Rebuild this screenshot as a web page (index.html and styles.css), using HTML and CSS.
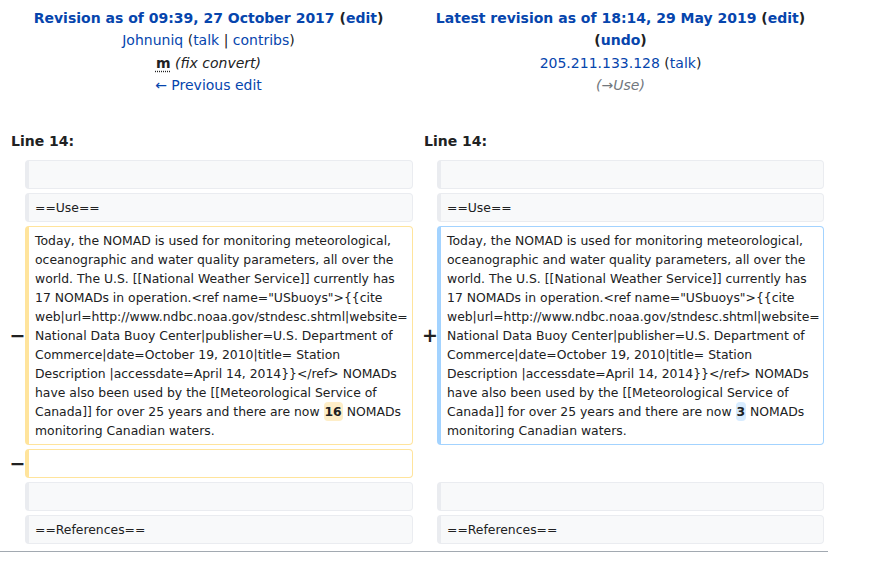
FILE: index.html
```html
<!DOCTYPE html>
<html>
<head>
<meta charset="utf-8">
<link rel="stylesheet" href="styles.css">
</head>
<body>
<div class="diff">
  <div class="hdr">
    <div class="title"><a>Revision as of 09:39, 27 October 2017</a> (<a>edit</a>)</div>
    <div><a>Johnuniq</a> (<a>talk</a> | <a>contribs</a>)</div>
    <div><abbr class="minor">m</abbr> <span class="summary">(fix convert)</span></div>
    <div><a>← Previous edit</a></div>
  </div>
  <div class="hdr">
    <div class="title"><a>Latest revision as of 18:14, 29 May 2019</a> (<a>edit</a>)</div>
    <div class="title">(<a>undo</a>)</div>
    <div><a>205.211.133.128</a> (<a>talk</a>)</div>
    <div><span class="autocomment">(<a class="grey">→</a>Use)</span></div>
  </div>

  <div class="lineno">Line 14:</div>
  <div class="lineno">Line 14:</div>

  <div class="marker"></div>
  <div class="box ctx">&nbsp;</div>
  <div class="marker"></div>
  <div class="box ctx">&nbsp;</div>

  <div class="marker"></div>
  <div class="box ctx">==Use==</div>
  <div class="marker"></div>
  <div class="box ctx">==Use==</div>

  <div class="marker">−</div>
  <div class="box del">Today, the NOMAD is used for monitoring meteorological, oceanographic and water quality parameters, all over the world. The U.S. [[National Weather Service]] currently has 17 NOMADs in operation.&lt;ref name="USbuoys"&gt;{{cite web|url=http://www.ndbc.noaa.gov/stndesc.shtml|website= National Data Buoy Center|publisher=U.S. Department of Commerce|date=October 19, 2010|title= Station Description |accessdate=April 14, 2014}}&lt;/ref&gt; NOMADs have also been used by the [[Meteorological Service of Canada]] for over 25 years and there are now <del class="chg">16</del> NOMADs monitoring Canadian waters.</div>
  <div class="marker">+</div>
  <div class="box add">Today, the NOMAD is used for monitoring meteorological, oceanographic and water quality parameters, all over the world. The U.S. [[National Weather Service]] currently has 17 NOMADs in operation.&lt;ref name="USbuoys"&gt;{{cite web|url=http://www.ndbc.noaa.gov/stndesc.shtml|website= National Data Buoy Center|publisher=U.S. Department of Commerce|date=October 19, 2010|title= Station Description |accessdate=April 14, 2014}}&lt;/ref&gt; NOMADs have also been used by the [[Meteorological Service of Canada]] for over 25 years and there are now <ins class="chg">3</ins> NOMADs monitoring Canadian waters.</div>

  <div class="marker">−</div>
  <div class="box del">&nbsp;</div>
  <div class="marker"></div>
  <div class="empty"></div>

  <div class="marker"></div>
  <div class="box ctx">&nbsp;</div>
  <div class="marker"></div>
  <div class="box ctx">&nbsp;</div>

  <div class="marker"></div>
  <div class="box ctx">==References==</div>
  <div class="marker"></div>
  <div class="box ctx">==References==</div>
</div>
<div class="rule"></div>
</body>
</html>
```
FILE: styles.css
```css
html, body {
  margin: 0;
  padding: 0;
  background: #fff;
}
body {
  font-family: "DejaVu Sans", sans-serif;
  color: #202122;
  font-size: 14px;
}
.diff {
  width: 828px;
  box-sizing: border-box;
  padding: 4px;
  display: grid;
  grid-template-columns: 17px 388px 16px 387px;
  column-gap: 4px;
  row-gap: 4px;
}
.hdr {
  grid-column: span 2;
  text-align: center;
  line-height: 22.4px;
  padding-top: 3px;
  font-size: 14px;
}
.hdr a {
  color: #0645ad;
}
.title {
  font-weight: bold;
}
.minor {
  font-weight: bold;
  text-decoration: underline dotted;
  text-underline-offset: 3px;
}
.summary {
  font-style: italic;
  color: #202122;
}
.autocomment {
  font-style: italic;
  color: #72777d;
}
.hdr a.grey {
  color: #72777d;
}
.lineno {
  grid-column: span 2;
  font-weight: bold;
  padding: 31px 0 6px 7px;
  line-height: 18px;
}
.marker {
  display: flex;
  align-items: center;
  justify-content: center;
  padding-left: 7px;
  margin-right: -3px;
  font-weight: bold;
  font-size: 19px;
  line-height: 1;
}
.box {
  font-size: 12.4px;
  line-height: 19px;
  border: 1px solid #eaecf0;
  border-left-width: 4px;
  border-radius: 4px;
  padding: 4px 2px 4px 6px;
  word-wrap: break-word;
  min-width: 0;
}
.ctx {
  background: #f8f9fa;
  color: #202122;
}
.del {
  border-color: #ffe49c;
  background: #fff;
}
.add {
  border-color: #a3d3ff;
  background: #fff;
}
.chg {
  text-decoration: none;
  font-weight: bold;
  border-radius: 4px;
  display: inline-block;
  line-height: 19px;
  padding: 0 1px;
}
del.chg {
  background: #feeec8;
}
ins.chg {
  background: #d8ecff;
}
.rule {
  width: 828px;
  height: 1px;
  background: #a2a9b1;
  margin-top: 3px;
}
```
